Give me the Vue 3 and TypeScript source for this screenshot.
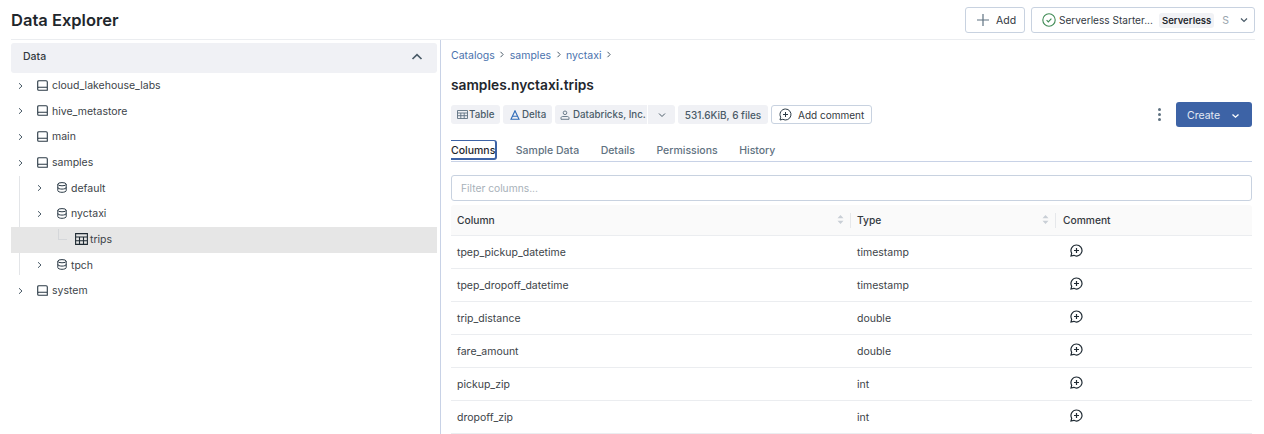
<script setup lang="ts">
interface TreeRow {
  name: string
  level: number
  kind: 'catalog' | 'schema' | 'table'
  selected?: boolean
}

const tree: TreeRow[] = [
  { name: 'cloud_lakehouse_labs', level: 0, kind: 'catalog' },
  { name: 'hive_metastore', level: 0, kind: 'catalog' },
  { name: 'main', level: 0, kind: 'catalog' },
  { name: 'samples', level: 0, kind: 'catalog' },
  { name: 'default', level: 1, kind: 'schema' },
  { name: 'nyctaxi', level: 1, kind: 'schema' },
  { name: 'trips', level: 2, kind: 'table', selected: true },
  { name: 'tpch', level: 1, kind: 'schema' },
  { name: 'system', level: 0, kind: 'catalog' }
]

const columns = [
  { name: 'tpep_pickup_datetime', type: 'timestamp' },
  { name: 'tpep_dropoff_datetime', type: 'timestamp' },
  { name: 'trip_distance', type: 'double' },
  { name: 'fare_amount', type: 'double' },
  { name: 'pickup_zip', type: 'int' },
  { name: 'dropoff_zip', type: 'int' }
]

const tabs = ['Columns', 'Sample Data', 'Details', 'Permissions', 'History']
const crumbs = ['Catalogs', 'samples', 'nyctaxi']
</script>

<template>
  <div class="page">
    <header class="top">
      <h1>Data Explorer</h1>
      <div class="top-actions">
        <button class="btn add">
          <svg width="14" height="14" viewBox="0 0 14 14"><path d="M7 1v12M1 7h12" stroke="#5f7281" stroke-width="1.2" fill="none" /></svg>
          Add
        </button>
        <button class="btn cluster">
          <svg width="14" height="14" viewBox="0 0 14 14" fill="none"><circle cx="7" cy="7" r="6.2" stroke="#3f8a54" stroke-width="1.1" /><path d="M4.6 7.2l1.7 1.7 3.1-3.3" stroke="#3f8a54" stroke-width="1.1" /></svg>
          <span class="cluster-name">Serverless Starter...</span>
          <span class="cluster-tag">Serverless</span>
          <span class="cluster-s">S</span>
          <svg width="8" height="8" viewBox="0 0 8 8" fill="none"><path d="M1 2.5l3 3 3-3" stroke="#4a5b68" stroke-width="1.2" /></svg>
        </button>
      </div>
    </header>

    <div class="body">
      <aside class="side">
        <div class="side-head">
          <span>Data</span>
          <svg width="12" height="12" viewBox="0 0 12 12" fill="none"><path d="M1.5 8L6 3.7 10.5 8" stroke="#4a5b68" stroke-width="1.7" /></svg>
        </div>
        <div class="tree">
          <span class="guide"></span>
          <div
            v-for="row in tree"
            :key="row.name"
            class="tree-row"
            :class="[`lvl-${row.level}`, { selected: row.selected }]"
          >
            <span v-if="row.kind === 'table'" class="elbow"></span>
            <svg v-else class="caret" width="8" height="8" viewBox="0 0 8 8" fill="none"><path d="M2 1.2l3 2.8-3 2.8" stroke="#4a5b68" stroke-width="1" /></svg>
            <svg v-if="row.kind === 'catalog'" class="ico" width="11" height="11" viewBox="0 0 11 11" fill="none">
              <path d="M.7 8V1.900C.7 1.100 1.200.7 1.900.7h7.200c.7 0 1.200.4 1.200 1.200V8M.7 8.200c0-.6.4-.9 1-.9h8.600v3H1.700c-.6 0-1-.4-1-1z" stroke="#2b3a46" stroke-width="1.100" />
            </svg>
            <svg v-else-if="row.kind === 'schema'" class="ico" width="10" height="11" viewBox="0 0 10 11" fill="none">
              <ellipse cx="5" cy="2.200" rx="4.200" ry="1.600" stroke="#2b3a46" />
              <path d="M.8 2.200v6.400c0 1 1.900 1.700 4.200 1.700s4.200-.7 4.200-1.700V2.200M.8 5.400c0 1 1.900 1.700 4.200 1.700s4.200-.7 4.200-1.700" stroke="#2b3a46" />
            </svg>
            <svg v-else class="ico" width="13" height="12" viewBox="0 0 13 12" fill="none">
              <path d="M.6.6h11.800v10.800H.6zM.6 4h11.800M.6 7.700h11.800M4.500 4v7.400M8.500 4v7.400" stroke="#1f2a33" stroke-width="1.100" />
            </svg>
            <span class="tree-label">{{ row.name }}</span>
          </div>
        </div>
      </aside>

      <main class="main">
        <nav class="crumbs">
          <template v-for="c in crumbs" :key="c">
            <a>{{ c }}</a>
            <svg class="crumb-sep" width="6" height="7" viewBox="0 0 6 7" fill="none"><path d="M1.500.8l2.600 2.700-2.600 2.700" stroke="#4a5b68" stroke-width="1" /></svg>
          </template>
        </nav>
        <h2>samples.nyctaxi.trips</h2>

        <div class="meta">
          <span class="chip c-table">
            <svg width="11" height="9" viewBox="0 0 11 9" fill="none"><path d="M.5.5h10v8H.5zM.5 3h10M.5 5.700h10M3.800 3v5.500M7.200 3v5.500" stroke="#5f7281" stroke-width=".9" /></svg>
            Table
          </span>
          <span class="chip c-delta">
            <svg width="10" height="10" viewBox="0 0 10 10" fill="none"><path d="M5 .8L1 9.200h8zM2.600 6.200h4.800" stroke="#2f6bb8" stroke-width="1.100" /></svg>
            Delta
          </span>
          <span class="chip-group">
            <span class="chip owner">
              <svg width="10" height="10" viewBox="0 0 10 10" fill="none"><circle cx="5" cy="2.800" r="1.800" stroke="#5f7281" stroke-width=".9" /><path d="M1 9.300V8c0-.9.7-1.500 1.600-1.500h4.800C8.300 6.500 9 7.100 9 8v1.300z" stroke="#5f7281" stroke-width=".9" /></svg>
              Databricks, Inc.
            </span>
            <span class="chip more">
              <svg width="8" height="8" viewBox="0 0 8 8" fill="none"><path d="M1 2.500L4 5.500l3-3" stroke="#4a5b68" stroke-width="1" /></svg>
            </span>
          </span>
          <span class="chip size">531.6KiB, 6 files</span>
          <button class="comment-btn">
            <svg width="13" height="13" viewBox="0 0 13 13" fill="none"><path d="M6.500 1a5.500 5.500 0 1 1-2.700 10.300L1 12l.7-2.800A5.500 5.500 0 0 1 6.500 1zM6.500 4v5M4 6.500h5" stroke="#2b3a46" stroke-width="1" /></svg>
            <span>Add comment</span>
          </button>
          <span class="meta-right">
            <span class="dots"><i></i><i></i><i></i></span>
            <button class="create">
              Create
              <svg width="9" height="8" viewBox="0 0 9 8" fill="none"><path d="M1.500 2.500l3 2.700 3-2.700" stroke="#fff" stroke-width="1.300" /></svg>
            </button>
          </span>
        </div>

        <div class="tabs">
          <span v-for="(t, i) in tabs" :key="t" class="tab" :class="{ active: i === 0 }">{{ t }}</span>
        </div>

        <input class="filter" placeholder="Filter columns..." />

        <div class="table">
          <div class="tr head">
            <div class="td c1">Column
              <svg class="sort" width="7" height="11" viewBox="0 0 7 11"><path d="M3.500 1L6.500 4.300H.5zM3.500 10L.5 6.700h6z" fill="#c9cfd6" /></svg>
            </div>
            <div class="td c2">Type
              <svg class="sort" width="7" height="11" viewBox="0 0 7 11"><path d="M3.500 1L6.500 4.300H.5zM3.500 10L.5 6.700h6z" fill="#c9cfd6" /></svg>
            </div>
            <div class="td c3">Comment</div>
          </div>
          <div v-for="col in columns" :key="col.name" class="tr">
            <div class="td c1">{{ col.name }}</div>
            <div class="td c2">{{ col.type }}</div>
            <div class="td c3">
              <svg class="add-note" width="13" height="13" viewBox="0 0 13 13" fill="none"><path d="M6.500 1a5.500 5.500 0 1 1-2.700 10.300L1 12l.7-2.800A5.500 5.500 0 0 1 6.500 1zM6.500 4v5M4 6.500h5" stroke="#1f2a33" stroke-width="1.200" /></svg>
            </div>
          </div>
        </div>
      </main>
    </div>
  </div>
</template>

<style>
html, body { margin: 0; background: #fff; }
</style>

<style scoped>
.page {
  width: 1264px;
  height: 434px;
  overflow: hidden;
  box-sizing: border-box;
  padding: 0 9px 0 11px;
  font-family: Inter, "Liberation Sans", sans-serif;
  font-size: 10.5px;
  color: #33393f;
}

.top {
  height: 40px;
  box-sizing: border-box;
  display: flex;
  justify-content: space-between;
  border-bottom: 1px solid #ebedf0;
}
h1 {
  margin: 0;
  font-size: 16.5px;
  line-height: 40px;
  font-weight: 600;
  color: #1f272d;
}
.top-actions { display: flex; gap: 6px; padding-top: 7px; }
.btn {
  height: 26px;
  box-sizing: border-box;
  display: flex;
  align-items: center;
  background: #fff;
  border: 1px solid #c8d2e0;
  border-radius: 3px;
  font: inherit;
  color: #33393f;
  padding: 0;
}
.add { width: 60px; padding-left: 10px; gap: 6px; }
.cluster { width: 224px; padding-left: 10px; white-space: nowrap; }
.cluster-name { margin-left: 3px; width: 94px; text-align: left; font-size: 10.1px; }
.cluster-tag {
  margin-left: 6px;
  padding: 2px 3px;
  background: #f1f2f5;
  border-radius: 3px;
  font-size: 9.5px;
  font-weight: 600;
  color: #1f272d;
}
.cluster-s { margin-left: 8px; color: #9aa5ae; margin-right: 11px; }

.body { display: flex; height: 394px; }

.side { flex: none; padding-top: 3px; box-sizing: border-box; width: 430px; border-right: 1px solid #c8d2e6; }
.side-head {
  width: 426px;
  height: 30px;
  box-sizing: border-box;
  display: flex;
  align-items: center;
  justify-content: space-between;
  padding: 0 14px 3px 12px;
  background: #f0f1f5;
  border-radius: 3px;
  font-size: 10.5px;
  font-weight: 500;
  color: #33393f;
}
.tree { position: relative; width: 426px; }
.guide {
  position: absolute;
  left: 8px;
  top: 103px;
  height: 99px;
  width: 1px;
  background: #e3e5e8;
}
.tree-row {
  height: 25.67px;
  display: flex;
  align-items: center;
  position: relative;
  color: #3c4348;
}
.tree-label { margin-top: -0.4px; }
.caret { margin-left: 6px; margin-right: 12px; flex: none; }
.ico { flex: none; margin-top: -1px; }
.tree-row.lvl-0 .ico { margin-right: 4px; }
.tree-row.lvl-1 { padding-left: 19px; }
.tree-row.lvl-1 .ico { margin-right: 4px; margin-left: 1px; }
.tree-row.lvl-2 { padding-left: 64px; }
.tree-row.lvl-2 .ico { margin-right: 2px; }
.tree-row.selected { background: #e6e6e6; }
.elbow {
  position: absolute;
  left: 47px;
  top: 2px;
  width: 8px;
  height: 10px;
  border-left: 1px solid #d5d7da;
  border-bottom: 1px solid #d5d7da;
}

.main { flex: 1; padding-left: 10px; padding-right: 3px; min-width: 0; }
.crumbs {
  height: 30px;
  display: flex;
  align-items: center;
  gap: 4.5px;
  color: #4a72ad;
}
.crumb-sep { margin-top: -2px; }
h2 {
  margin: 0;
  font-size: 13.75px;
  line-height: 30px;
  height: 30px;
  font-weight: 600;
  color: #1f272d;
}
.meta {
  margin-top: 5px;
  display: flex;
  align-items: center;
  gap: 3px;
  height: 19px;
}
.chip {
  height: 19px;
  box-sizing: border-box;
  display: inline-flex;
  align-items: center;
  gap: 2px;
  padding: 0 5px;
  background: #f0f1f5;
  border-radius: 3px;
  font-size: 9.75px;
  font-weight: 500;
  color: #4a5b68;
}
.c-table { width: 49px; padding-left: 6px; gap: 1px; }
.c-delta { width: 49px; padding-left: 7px; }
.chip-group { display: flex; gap: 1px; }
.owner { border-radius: 3px 0 0 3px; width: 92px; padding: 0 0 0 5px; gap: 3px; }
.more { border-radius: 0 3px 3px 0; width: 27px; justify-content: center; padding: 0; }
.size { width: 90px; justify-content: center; padding: 0; font-size: 10px; }
.comment-btn {
  height: 19px;
  width: 101px;
  box-sizing: border-box;
  display: inline-flex;
  align-items: center;
  gap: 6px;
  padding: 0 0 0 7px;
  background: #fff;
  border: 1px solid #c8d2e0;
  border-radius: 3px;
  font: inherit;
  font-size: 10px;
  color: #33393f;
}
.meta-right {
  margin-left: auto;
  display: flex;
  align-items: center;
  gap: 15px;
}
.dots { display: flex; flex-direction: column; gap: 2px; }
.dots i { width: 3px; height: 3px; border-radius: 50%; background: #5f7281; }
.create {
  width: 76px;
  height: 25px;
  box-sizing: border-box;
  border: 0;
  border-radius: 3px;
  background: #3d63a6;
  color: #e4eaf4;
  font: inherit;
  display: flex;
  align-items: center;
  padding: 2px 0 0 11px;
  gap: 11px;
}

.tabs {
  margin-top: 14px;
  height: 24px;
  box-sizing: border-box;
  display: flex;
  gap: 21.5px;
  border-bottom: 1px solid #c8d2e6;
  font-weight: 500;
  color: #5f7281;
  line-height: 18px;
}
.tab { height: 18px; margin-top: 4px; }
.tab.active {
  color: #1f272d;
  box-sizing: border-box;
  height: 20px;
  line-height: 20px;
  margin-top: 2px;
  margin-right: -3px;
  border: 1px solid #3d63a6;
  border-width: 1px 2px 2px 0;
  border-radius: 0 3px 3px 0;
}

.filter {
  display: block;
  margin-top: 13px;
  width: 100%;
  height: 26px;
  box-sizing: border-box;
  padding: 0 9px;
  border: 1px solid #c8d2e0;
  border-radius: 3px;
  font: inherit;
  font-size: 10.25px;
  outline: none;
}
.filter::placeholder { color: #a8b1b9; }

.table { margin-top: 4px; }
.tr {
  display: flex;
  height: 33px;
  box-sizing: border-box;
  border-bottom: 1px solid #ebedf0;
  color: #3c4348;
}
.tr.head {
  height: 31px;
  background: #fafafa;
  border-radius: 3px 3px 0 0;
  font-weight: 500;
  font-size: 10.25px;
  color: #33393f;
}
.td {
  display: flex;
  align-items: center;
  padding-left: 6px;
  padding-top: 1px;
  box-sizing: border-box;
  position: relative;
}
.head .td { padding-top: 0; }
.c1 { width: 400px; }
.c2 { width: 205px; }
.c3 { flex: 1; }
.head .c3 { padding-left: 7px; }
.add-note { margin: -4px 0 0 8px; }
.sort { position: absolute; right: 7px; top: 9px; }
.head .c1::after, .head .c2::after {
  content: "";
  position: absolute;
  right: 0;
  top: 8px;
  height: 15px;
  width: 1px;
  background: #e6e8eb;
}
</style>
